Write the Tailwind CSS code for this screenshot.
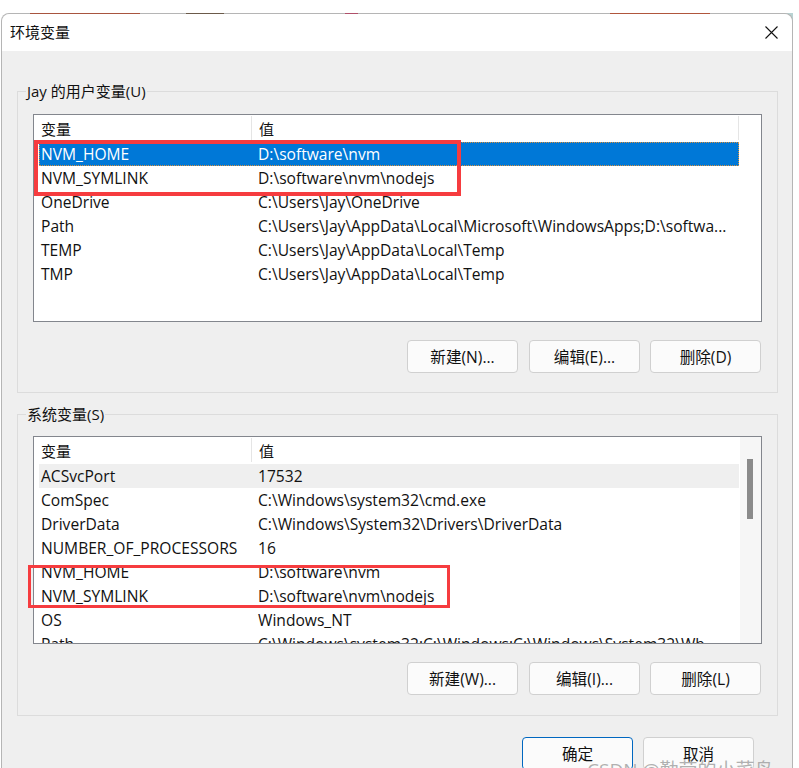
<!DOCTYPE html>
<html lang="zh-CN">

<head>
    <meta charset="UTF-8" />
    <title>环境变量</title>
    <script src="https://cdn.jsdelivr.net/npm/@tailwindcss/browser@4"></script>
</head>

<body class="relative h-[768px] overflow-hidden bg-white font-['Open_Sans','Noto_Sans_CJK_SC',sans-serif] text-[15.6px] text-[#111]">
    <!-- bits of wallpaper behind the window -->
    <div class="absolute left-[785px] top-[13px] w-[8px] h-[8px] bg-[#b9d3d3]"></div>

    <!-- window -->
    <div class="relative z-10 mt-[13px] ml-px w-[792px] h-[755px] rounded-t-[8px] border-t border-l border-r border-[#b5b5b5] bg-[#efefef]">
        <div class="h-[37px] flex items-center justify-between pl-[8px] pr-[14px] bg-white rounded-t-[8px]">
            <span class="text-[15px]">环境变量</span>
            <svg class="w-[13px] h-[13px]" viewBox="0 0 13 13" fill="none" stroke="#111" stroke-width="1.1">
                <path d="M0.5 0.5L12.5 12.5M12.5 0.5L0.5 12.5" />
            </svg>
        </div>

        <div class="pt-[40px] pl-[15px]">
            <!-- user vars -->
            <div class="relative w-[761px] h-[302px] border border-[#dcdcdc] pt-[22px] pl-[15px]">
                <span class="absolute -top-[11px] left-[8px] px-[1px] bg-[#efefef] text-[15px] leading-[20px]">Jay 的用户变量(U)</span>
                <div class="w-[729px] h-[208px] border border-[#83868d] bg-white overflow-hidden">
                    <div class="h-[27px] w-[705px] flex pl-[7px]">
                        <div class="w-[211px] h-[24px] mt-[1px] border-r border-[#e5e5e5] text-[15px] leading-[26px]">变量</div>
                        <div class="w-[487px] h-[24px] mt-[1px] border-r border-[#e5e5e5] pl-[7px] text-[15px] leading-[26px]">值</div>
                    </div>
                    <div class="w-[700px] ml-[5px]">
                        <div class="h-[24px] pt-[2px] flex items-center bg-[#0078d7] text-white outline-1 outline-dotted -outline-offset-1 outline-[#d9913f]">
                            <div class="w-[219px] shrink-0 pl-[2px]">NVM_HOME</div>
                            <div>D:\software\nvm</div>
                        </div>
                        <div class="h-[24px] pt-[2px] flex items-center">
                            <div class="w-[219px] shrink-0 pl-[2px]">NVM_SYMLINK</div>
                            <div>D:\software\nvm\nodejs</div>
                        </div>
                        <div class="h-[24px] pt-[2px] flex items-center">
                            <div class="w-[219px] shrink-0 pl-[2px]">OneDrive</div>
                            <div>C:\Users\Jay\OneDrive</div>
                        </div>
                        <div class="h-[24px] pt-[2px] flex items-center">
                            <div class="w-[219px] shrink-0 pl-[2px]">Path</div>
                            <div class="whitespace-nowrap">C:\Users\Jay\AppData\Local\Microsoft\WindowsApps;D:\softwa...</div>
                        </div>
                        <div class="h-[24px] pt-[2px] flex items-center">
                            <div class="w-[219px] shrink-0 pl-[2px]">TEMP</div>
                            <div>C:\Users\Jay\AppData\Local\Temp</div>
                        </div>
                        <div class="h-[24px] pt-[2px] flex items-center">
                            <div class="w-[219px] shrink-0 pl-[2px]">TMP</div>
                            <div>C:\Users\Jay\AppData\Local\Temp</div>
                        </div>
                    </div>
                </div>
                <div class="flex mt-[18px] ml-[374px]">
                    <button class="w-[111px] h-[33px] pt-[2px] rounded-[4px] border border-[#d0d0d0] bg-[#fbfbfb]">新建(N)...</button>
                    <button class="ml-[11px] w-[111px] h-[33px] pt-[2px] rounded-[4px] border border-[#d0d0d0] bg-[#fbfbfb]">编辑(E)...</button>
                    <button class="ml-[10px] w-[111px] h-[33px] pt-[2px] rounded-[4px] border border-[#d0d0d0] bg-[#fbfbfb]">删除(D)</button>
                </div>
            </div>

            <!-- system vars -->
            <div class="relative mt-[21px] w-[761px] h-[302px] border border-[#dcdcdc] pt-[21px] pl-[15px]">
                <span class="absolute -top-[11px] left-[8px] px-[1px] bg-[#efefef] text-[15px] leading-[20px]">系统变量(S)</span>
                <div class="w-[729px] h-[208px] border border-[#83868d] bg-white overflow-hidden flex">
                    <div class="w-[706px] shrink-0">
                        <div class="h-[27px] w-[705px] flex pl-[7px]">
                            <div class="w-[211px] h-[24px] mt-[1px] border-r border-[#e5e5e5] text-[15px] leading-[26px]">变量</div>
                            <div class="pl-[7px] mt-[1px] text-[15px] leading-[26px]">值</div>
                        </div>
                        <div class="w-[700px] ml-[5px]">
                            <div class="h-[24px] pt-[2px] flex items-center bg-[#efefef]">
                                <div class="w-[219px] shrink-0 pl-[2px]">ACSvcPort</div>
                                <div>17532</div>
                            </div>
                            <div class="h-[24px] pt-[2px] flex items-center">
                                <div class="w-[219px] shrink-0 pl-[2px]">ComSpec</div>
                                <div>C:\Windows\system32\cmd.exe</div>
                            </div>
                            <div class="h-[24px] pt-[2px] flex items-center">
                                <div class="w-[219px] shrink-0 pl-[2px]">DriverData</div>
                                <div>C:\Windows\System32\Drivers\DriverData</div>
                            </div>
                            <div class="h-[24px] pt-[2px] flex items-center">
                                <div class="w-[219px] shrink-0 pl-[2px]">NUMBER_OF_PROCESSORS</div>
                                <div>16</div>
                            </div>
                            <div class="h-[24px] pt-[2px] flex items-center">
                                <div class="w-[219px] shrink-0 pl-[2px]">NVM_HOME</div>
                                <div>D:\software\nvm</div>
                            </div>
                            <div class="h-[24px] pt-[2px] flex items-center">
                                <div class="w-[219px] shrink-0 pl-[2px]">NVM_SYMLINK</div>
                                <div>D:\software\nvm\nodejs</div>
                            </div>
                            <div class="h-[24px] pt-[2px] flex items-center">
                                <div class="w-[219px] shrink-0 pl-[2px]">OS</div>
                                <div>Windows_NT</div>
                            </div>
                            <div class="h-[24px] pt-[2px] flex items-center">
                                <div class="w-[219px] shrink-0 pl-[2px]">Path</div>
                                <div class="whitespace-nowrap">C:\Windows\system32;C:\Windows;C:\Windows\System32\Wb...</div>
                            </div>
                        </div>
                    </div>
                    <!-- scrollbar -->
                    <div class="w-[21px] h-full bg-[#f6f6f6] pl-[7px] pt-[22px]">
                        <div class="w-[6px] h-[60px] bg-[#8a8a8a]"></div>
                    </div>
                </div>
                <div class="flex mt-[18px] ml-[374px]">
                    <button class="w-[111px] h-[33px] pt-[2px] rounded-[4px] border border-[#d0d0d0] bg-[#fbfbfb]">新建(W)...</button>
                    <button class="ml-[11px] w-[111px] h-[33px] pt-[2px] rounded-[4px] border border-[#d0d0d0] bg-[#fbfbfb]">编辑(I)...</button>
                    <button class="ml-[10px] w-[111px] h-[33px] pt-[2px] rounded-[4px] border border-[#d0d0d0] bg-[#fbfbfb]">删除(L)</button>
                </div>
            </div>

            <div class="flex mt-[21px] ml-[505px] gap-[10px]">
                <button class="w-[111px] h-[33px] pt-[2px] rounded-[4px] border border-[#0067c0] bg-[#fbfbfb]">确定</button>
                <button class="w-[111px] h-[33px] pt-[2px] rounded-[4px] border border-[#d0d0d0] bg-[#fbfbfb]">取消</button>
            </div>
        </div>
    </div>

    <!-- wallpaper showing along the window's top edge -->
    <div class="absolute z-20 left-[30px] top-[13px] w-[110px] h-px bg-[#a8553f]"></div>
    <div class="absolute z-20 left-[186px] top-[13px] w-[38px] h-px bg-[#6b5a4a]"></div>
    <div class="absolute z-20 left-[345px] top-[13px] w-[13px] h-px bg-[#b0506a]"></div>
    <div class="absolute z-20 left-[610px] top-[13px] w-[100px] h-px bg-[#b0563c]"></div>

    <!-- red annotation boxes -->
    <div class="absolute z-20 left-[34px] top-[140px] w-[427px] h-[56px] border-[4px] border-[#f63c3f]"></div>
    <div class="absolute z-20 left-[28px] top-[565px] w-[422px] h-[43px] border-[3px] border-[#f63c3f]"></div>

    <!-- watermark -->
    <div class="absolute z-20 left-[587px] top-[758px] text-[19px] leading-[24px] text-[#8f8f8f]/70 whitespace-nowrap">CSDN @勤劳的小菜鸟</div>
</body>

</html>
